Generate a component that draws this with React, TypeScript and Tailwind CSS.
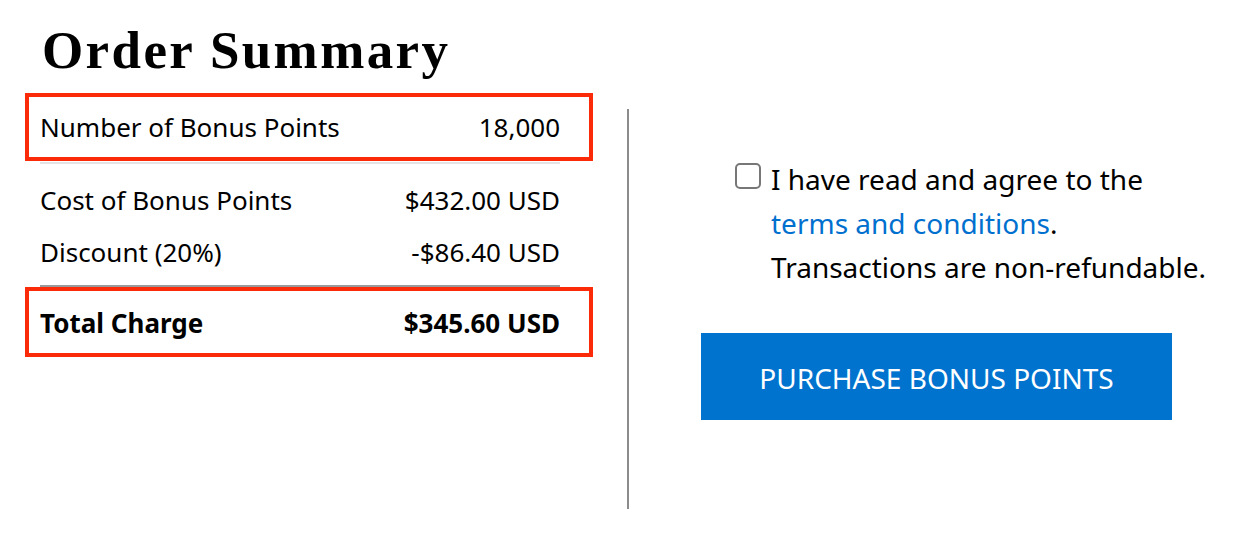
export default function App() {
  const sans = "font-['Noto_Sans','Open_Sans',sans-serif]";

  return (
    <div className={`min-h-[548px] bg-white text-black ${sans}`}>
      <div className="flex items-start pt-[24px]">
        {/* order summary */}
        <div className="ml-[25px] w-[568px]">
          <h1 className="pl-[17px] mb-[16px] text-[53px] leading-[53px] font-bold tracking-[0.045em] font-['Liberation_Serif','Times_New_Roman',serif]">
            Order Summary
          </h1>

          <div className="flex h-[68px] items-center justify-between border-4 border-[#fb2a08] pl-[11px] pr-[29px] text-[26px]">
            <span>Number of Bonus Points</span>
            <span>18,000</span>
          </div>
          <div className="ml-[15px] mt-[1px] h-[2px] w-[520px] bg-[#e4e4e4]" />

          <div className="pt-[10px] pb-[7px] pl-[15px] pr-[33px] text-[26px]">
            <div className="flex h-[52px] items-center justify-between">
              <span>Cost of Bonus Points</span>
              <span>$432.00 USD</span>
            </div>
            <div className="flex h-[52px] items-center justify-between">
              <span>Discount (20%)</span>
              <span>-$86.40 USD</span>
            </div>
          </div>
          <div className="ml-[15px] h-[2px] w-[520px] bg-[#9a9a9a]" />

          <div className="flex h-[70px] items-center justify-between border-4 border-[#fb2a08] pl-[11px] pr-[29px] pt-[2px] text-[26px] font-bold">
            <span>Total Charge</span>
            <span>$345.60 USD</span>
          </div>
        </div>

        {/* divider */}
        <div className="ml-[34px] mt-[85px] h-[400px] w-[2px] bg-[#8c8c8c]" />

        {/* agreement + purchase */}
        <div className="ml-[72px] mt-[133px]">
          <div className="flex gap-[10px] pl-[34px] text-[28px] leading-[44px]">
            <input
              type="checkbox"
              className="mt-[6px] h-[26px] w-[26px] shrink-0 appearance-none rounded-[5px] border-2 border-[#777777] bg-white"
            />
            <p>
              I have read and agree to the
              <br />
              <a href="#" className="text-[#0070cf]">terms and conditions</a>.
              <br />
              Transactions are non-refundable.
            </p>
          </div>

          <button
            type="button"
            className="mt-[44px] flex h-[87px] w-[471px] items-center justify-center bg-[#0073cf] pt-[3px] text-[28px] text-white"
          >
            PURCHASE BONUS POINTS
          </button>
        </div>
      </div>
    </div>
  );
}
